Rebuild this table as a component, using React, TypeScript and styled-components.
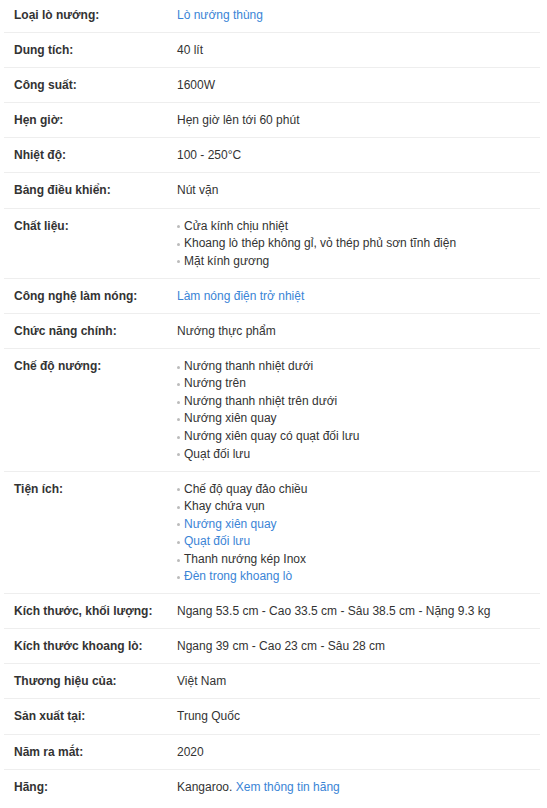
import React from "react";
import styled, { createGlobalStyle } from "styled-components";

/**--------------------------------------------
    Global styles
-----------------------------------------------*/
const GlobalStyle = createGlobalStyle`
    html, body {
        margin: 0;
        padding: 0;
        background: #fff;
    }
    body {
        font-family: "Liberation Sans", Arial, Helvetica, sans-serif;
        color: #333;
    }
`;

/**--------------------------------------------
    Styled Components for the spec table
-----------------------------------------------*/
const SpecList = styled.ul`
    list-style: none;
    margin: -1.75px 7px 0 4px;
    padding: 0;
`;

// One parameter row: label on the left, value on the right
const SpecRow = styled.li`
    display: grid;
    grid-template-columns: 163px 1fr;
    padding: 9px 10px 7.5px;
    border-bottom: 1px solid #eee;
    font-size: 12px;
    line-height: 17.55px;

    &:last-child {
        border-bottom: none;
    }
`;

const Label = styled.span`
    font-weight: 700;
    color: #333;
`;

const Value = styled.div`
    color: #333;
`;

const Link = styled.a`
    color: #3a84d6;
    text-decoration: none;
`;

const Bullets = styled.ul`
    list-style: none;
    margin: 0;
    padding: 0;
`;

// Bullet item with a small grey dot before the text
const Bullet = styled.li<{ $link?: boolean }>`
    display: flex;
    align-items: center;
    color: ${({ $link }) => ($link ? "#3a84d6" : "#333")};

    &::before {
        content: "";
        flex: none;
        width: 3px;
        height: 3px;
        margin: 1px 4px 0 0;
        border-radius: 50%;
        background: #bbb;
    }
`;

/**--------------------------------------------
    Data
-----------------------------------------------*/
type Item = { text: string; link?: boolean };
type Spec = {
    label: string;
    value?: React.ReactNode;
    items?: Item[];
};

const specs: Spec[] = [
    { label: "Loại lò nướng:", value: <Link href="#">Lò nướng thùng</Link> },
    { label: "Dung tích:", value: "40 lít" },
    { label: "Công suất:", value: "1600W" },
    { label: "Hẹn giờ:", value: "Hẹn giờ lên tới 60 phút" },
    { label: "Nhiệt độ:", value: "100 - 250°C" },
    { label: "Bảng điều khiển:", value: "Nút vặn" },
    {
        label: "Chất liệu:",
        items: [
            { text: "Cửa kính chịu nhiệt" },
            { text: "Khoang lò thép không gỉ, vỏ thép phủ sơn tĩnh điện" },
            { text: "Mặt kính gương" },
        ],
    },
    { label: "Công nghệ làm nóng:", value: <Link href="#">Làm nóng điện trở nhiệt</Link> },
    { label: "Chức năng chính:", value: "Nướng thực phẩm" },
    {
        label: "Chế độ nướng:",
        items: [
            { text: "Nướng thanh nhiệt dưới" },
            { text: "Nướng trên" },
            { text: "Nướng thanh nhiệt trên dưới" },
            { text: "Nướng xiên quay" },
            { text: "Nướng xiên quay có quạt đối lưu" },
            { text: "Quạt đối lưu" },
        ],
    },
    {
        label: "Tiện ích:",
        items: [
            { text: "Chế độ quay đảo chiều" },
            { text: "Khay chứa vụn" },
            { text: "Nướng xiên quay", link: true },
            { text: "Quạt đối lưu", link: true },
            { text: "Thanh nướng kép Inox" },
            { text: "Đèn trong khoang lò", link: true },
        ],
    },
    { label: "Kích thước, khối lượng:", value: "Ngang 53.5 cm - Cao 33.5 cm - Sâu 38.5 cm - Nặng 9.3 kg" },
    { label: "Kích thước khoang lò:", value: "Ngang 39 cm - Cao 23 cm - Sâu 28 cm" },
    { label: "Thương hiệu của:", value: "Việt Nam" },
    { label: "Sản xuất tại:", value: "Trung Quốc" },
    { label: "Năm ra mắt:", value: "2020" },
    {
        label: "Hãng:",
        value: (
            <>
                Kangaroo. <Link href="#">Xem thông tin hãng</Link>
            </>
        ),
    },
];

/**--------------------------------
    App Component
-----------------------------------*/
export default function App() {
    return (
        <>
            <GlobalStyle />
            <SpecList aria-label="Thông số kỹ thuật">
                {specs.map((s) => (
                    <SpecRow key={s.label}>
                        <Label>{s.label}</Label>
                        <Value>
                            {s.items ? (
                                <Bullets>
                                    {s.items.map((it) => (
                                        <Bullet key={it.text} $link={it.link}>
                                            {it.text}
                                        </Bullet>
                                    ))}
                                </Bullets>
                            ) : (
                                s.value
                            )}
                        </Value>
                    </SpecRow>
                ))}
            </SpecList>
        </>
    );
}
